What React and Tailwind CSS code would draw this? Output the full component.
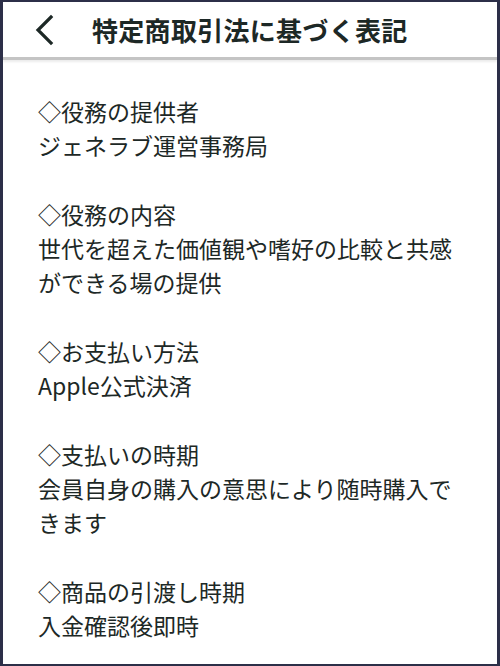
const sections = [
  { title: '◇役務の提供者', body: ['ジェネラブ運営事務局'] },
  { title: '◇役務の内容', body: ['世代を超えた価値観や嗜好の比較と共感', 'ができる場の提供'] },
  { title: '◇お支払い方法', body: ['Apple公式決済'] },
  { title: '◇支払いの時期', body: ['会員自身の購入の意思により随時購入で', 'きます'] },
  { title: '◇商品の引渡し時期', body: ['入金確認後即時'] },
]

export default function App() {
  return (
    <div
      className="w-[500px] h-[666px] overflow-hidden bg-white border-x-[3px] border-t-2 border-b-2 border-[#2c2f48] text-[#1d2826]"
      style={{ fontFamily: '"Noto Sans CJK JP", "Noto Sans", sans-serif' }}
    >
      <header className="h-[58px] flex items-center border-b-[3px] border-[#c4c4c4] shadow-[0_2px_2px_rgba(0,0,0,0.08)]">
        <button className="w-[50px] ml-[28px] flex items-center">
          <svg width="26" height="32" viewBox="0 0 26 32" fill="none">
            <path d="M20 3 L7 16 L20 29" stroke="#1d2826" strokeWidth="3.2" strokeLinecap="square" />
          </svg>
        </button>
        <h1 className="ml-[11px] text-[26px] font-bold tracking-[0.3px] leading-none">特定商取引法に基づく表記</h1>
      </header>

      <main className="pl-[35px] pt-[34px] text-[23px] leading-[34px]">
        {sections.map((s) => (
          <section key={s.title} className="mb-[35px]">
            <p>{s.title}</p>
            {s.body.map((line) => (
              <p key={line}>{line}</p>
            ))}
          </section>
        ))}
      </main>
    </div>
  )
}
